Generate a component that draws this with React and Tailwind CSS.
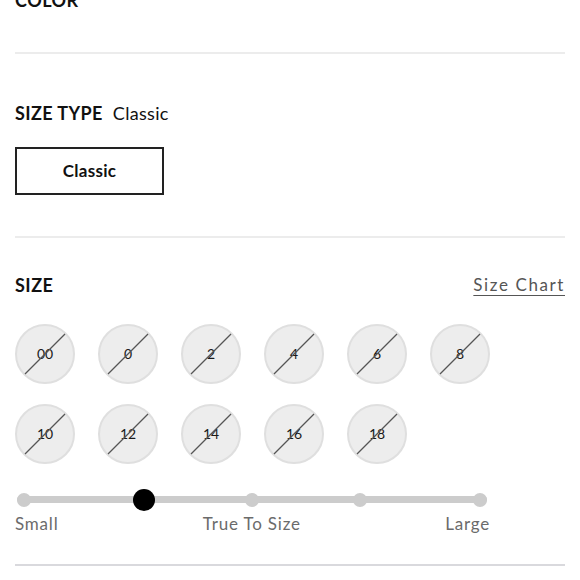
import React from "react";

const sizes = [
  ["00", "0", "2", "4", "6", "8"],
  ["10", "12", "14", "16", "18"],
];

const stops = [9, 129, 237, 345, 465];

function SizeBubble({ label }) {
  return (
    <div className="relative w-[60px] h-[60px] rounded-full bg-[#ededed] border-2 border-[#dfdfdf] flex items-center justify-center">
      <span className="text-[14px] text-[#1a1a1a] leading-none">{label}</span>
      <svg className="absolute -inset-[2px]" width="60" height="60" viewBox="0 0 60 60">
        <line x1="10" y1="50" x2="50" y2="10" stroke="#555" strokeWidth="1.2" />
      </svg>
    </div>
  );
}

function FitSlider() {
  return (
    <div className="relative w-[475px] h-[22px]">
      <div className="absolute left-[2px] right-[3px] top-[7px] h-[7px] rounded-full bg-[#cccccc]" />
      {stops.map((x, i) =>
        i === 1 ? (
          <div
            key={x}
            className="absolute top-0 w-[22px] h-[22px] -ml-[11px] rounded-full bg-black"
            style={{ left: x }}
          />
        ) : (
          <div
            key={x}
            className="absolute top-[4px] w-[14px] h-[14px] -ml-[7px] rounded-full bg-[#cccccc]"
            style={{ left: x }}
          />
        )
      )}
    </div>
  );
}

export default function App() {
  return (
    <div className="w-[580px] h-[580px] overflow-hidden bg-white px-[15px] font-['Lato',sans-serif] text-[#111]">
      <div className="-mt-[14px] h-[28px] flex items-center text-[18px] font-bold tracking-[0.5px]">
        COLOR
      </div>
      <div className="mt-[38px] h-[2px] bg-[#ececec]" />

      <div className="mt-[45px] h-[28px] flex items-center gap-[10px] text-[18px]">
        <span className="font-bold tracking-[0.4px]">SIZE TYPE</span>
        <span className="tracking-[0.3px]">Classic</span>
      </div>
      <button className="mt-[20px] w-[149px] h-[48px] border-2 border-[#222] flex items-center justify-center text-[17px] font-bold tracking-[0.3px]">
        Classic
      </button>
      <div className="mt-[41px] h-[2px] bg-[#ececec]" />

      <div className="mt-[33px] h-[28px] flex items-center justify-between">
        <span className="text-[18px] font-bold tracking-[0.5px]">SIZE</span>
        <a className="text-[17px] text-[#555] tracking-[1.6px] underline underline-offset-[4px]">
          Size Chart
        </a>
      </div>

      <div className="mt-[25px] flex flex-col gap-[20px]">
        {sizes.map((row, i) => (
          <div key={i} className="flex gap-[23px]">
            {row.map((s) => (
              <SizeBubble key={s} label={s} />
            ))}
          </div>
        ))}
      </div>

      <div className="mt-[25px]">
        <FitSlider />
      </div>
      <div className="mt-[1px] w-[475px] h-[24px] flex items-center justify-between text-[17px] text-[#6b6b6b] tracking-[0.8px]">
        <span>Small</span>
        <span>True To Size</span>
        <span>Large</span>
      </div>
      <div className="mt-[28px] h-[2px] bg-[#d9d9dd]" />
    </div>
  );
}
